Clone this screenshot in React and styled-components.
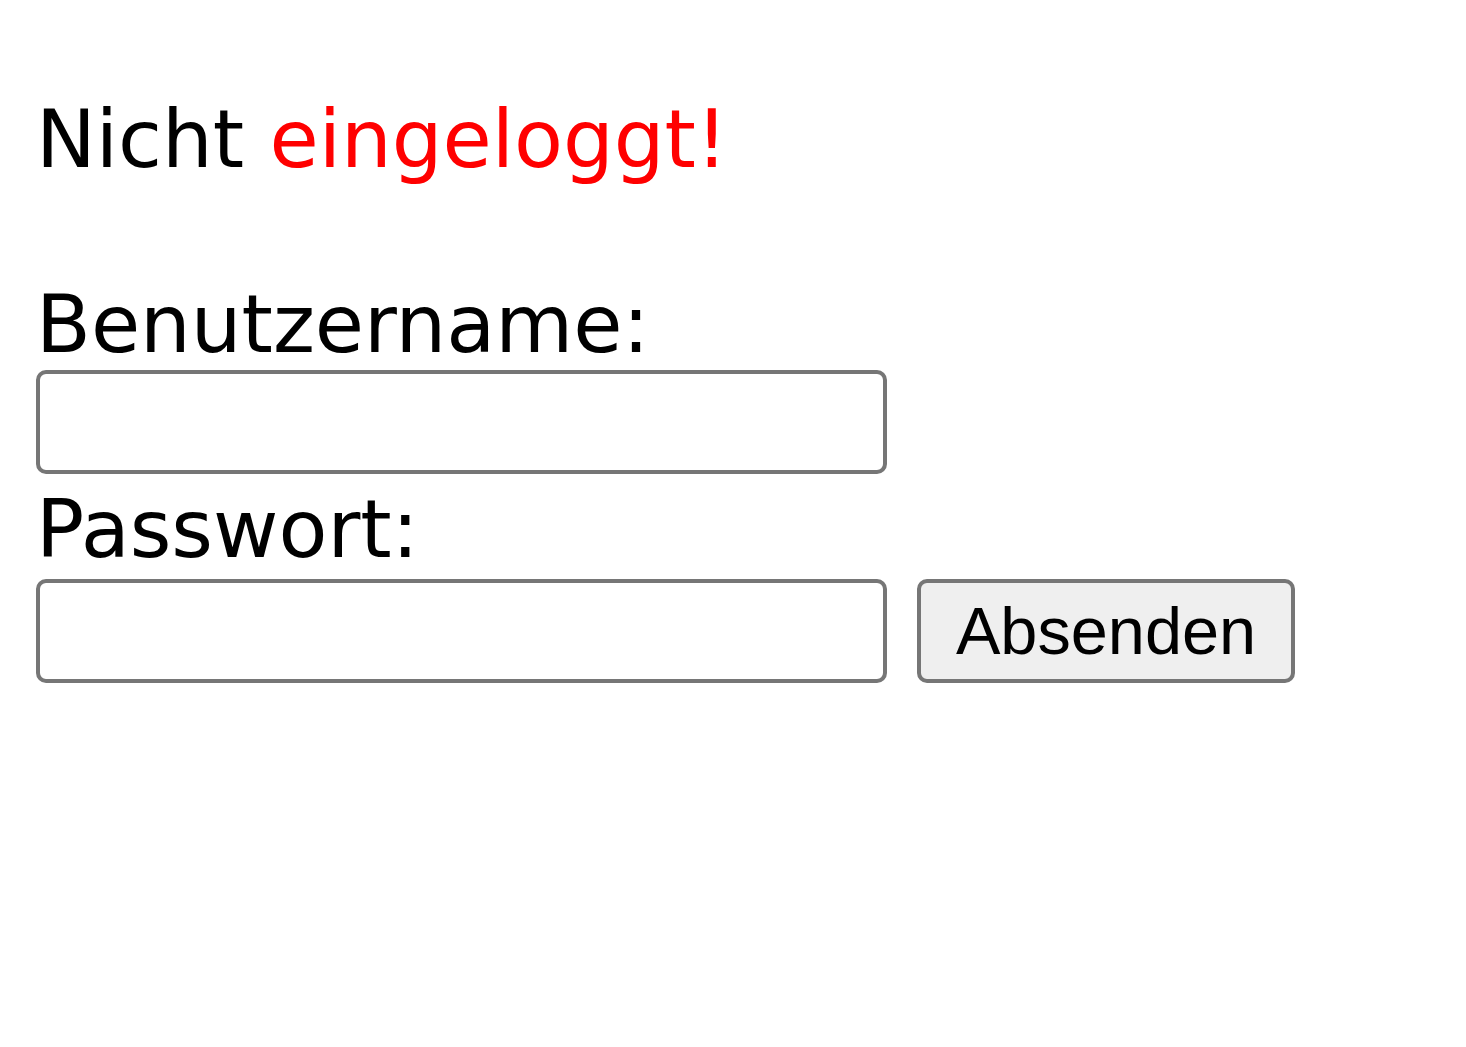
import React from "react";
import styled, { createGlobalStyle } from "styled-components";

const GlobalStyle = createGlobalStyle`
  html, body {
    margin: 0;
    padding: 0;
    background: #ffffff;
  }
  body {
    font-family: "DejaVu Sans", Verdana, sans-serif;
    color: #000000;
  }
`;

const Page = styled.div`
  padding: 93px 36px 0 36px;
  font-size: 80px;
  line-height: 93px;
`;

const Status = styled.p`
  margin: 0 0 92px 0;
  white-space: nowrap;
`;

const Alert = styled.span`
  color: #ff0000;
`;

const Form = styled.form`
  display: flex;
  flex-direction: column;
  align-items: flex-start;
`;

const Label = styled.label`
  display: block;
  height: 92px;
  margin-top: ${(p) => p.$top || 0}px;
  margin-bottom: ${(p) => p.$bottom || 0}px;
  white-space: nowrap;
`;

const Row = styled.div`
  display: flex;
  align-items: center;
  gap: 30px;
`;

const Field = styled.input`
  box-sizing: border-box;
  width: 851px;
  height: 104px;
  margin: 0;
  padding: 0 12px;
  border: 4px solid #767676;
  border-radius: 10px;
  background: #ffffff;
  font-family: "Liberation Sans", Arial, sans-serif;
  font-size: 66px;
  outline: none;
`;

const Submit = styled.button`
  box-sizing: border-box;
  width: 378px;
  height: 104px;
  margin: 0;
  padding: 0;
  border: 4px solid #767676;
  border-radius: 10px;
  background: #efefef;
  color: #000000;
  font-family: "Liberation Sans", Arial, sans-serif;
  font-size: 66.67px;
  line-height: 1;
  cursor: pointer;
`;

export default function App() {
  return (
    <>
      <GlobalStyle />
      <Page>
        <Status>
          Nicht <Alert>eingeloggt!</Alert>
        </Status>
        <Form onSubmit={(e) => e.preventDefault()}>
          <Label htmlFor="user">Benutzername:</Label>
          <Field id="user" type="text" />
          <Label htmlFor="pass" $top={9} $bottom={4}>
            Passwort:
          </Label>
          <Row>
            <Field id="pass" type="password" />
            <Submit type="submit">Absenden</Submit>
          </Row>
        </Form>
      </Page>
    </>
  );
}
